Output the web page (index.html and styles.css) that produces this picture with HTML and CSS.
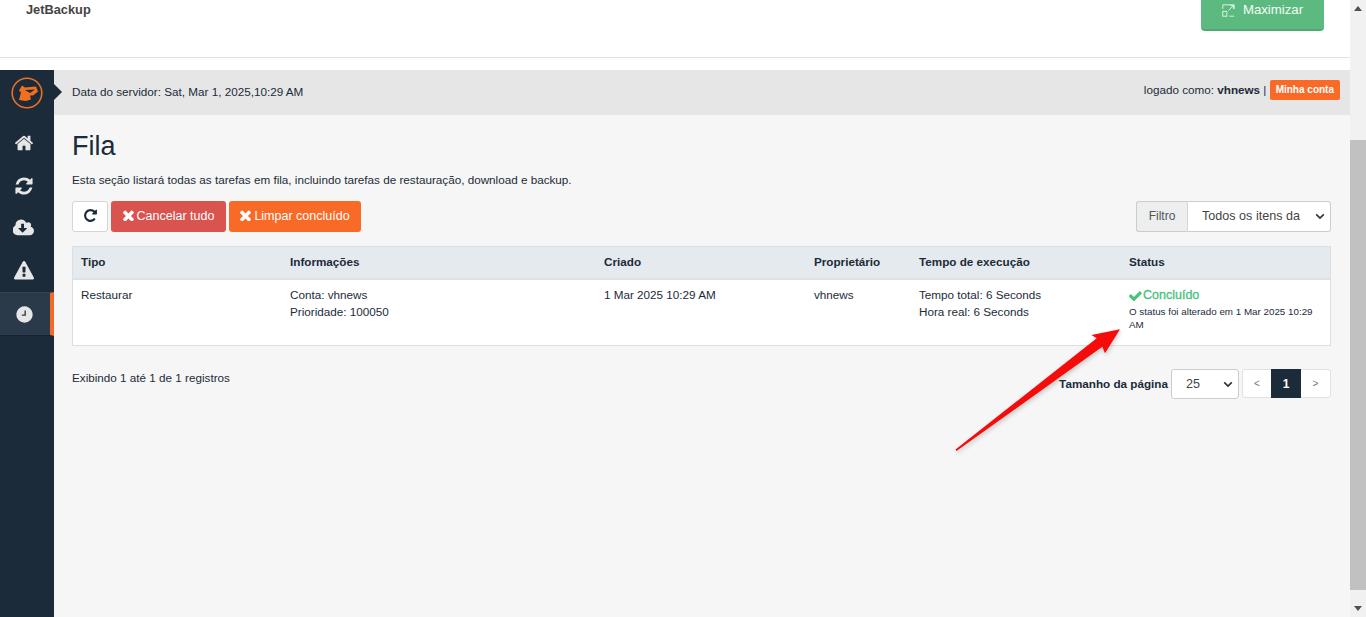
FILE: index.html
```html
<!DOCTYPE html>
<html lang="pt">
<head>
<meta charset="utf-8">
<title>JetBackup - Fila</title>
<link rel="stylesheet" href="styles.css">
</head>
<body>
<div class="window">
  <div class="page">
    <header class="cp-header">
      <div class="cp-title">JetBackup</div>
      <a class="max-btn">
        <svg class="max-icon" viewBox="0 0 16 16" fill="none" stroke="currentColor" stroke-width="1"><rect x="1" y="9" width="5" height="6"/><path d="M1 6V1h14v5M9 15h6M8 8l6-6M10 2h4v4"/></svg>
        Maximizar
      </a>
    </header>
    <div class="app">
      <nav class="sidebar">
        <div class="logo">
          <svg viewBox="0 0 32 32" width="32" height="32"><circle cx="16" cy="16" r="14.8" fill="none" stroke="#e8702a" stroke-width="1.6"/><path d="M8 23l2-7.500-2-2 3-5 3 2 11-1 2 5-5 4h-3l1 4-5 1.500z" fill="#f0701f"/><path d="M14 13l10-.5-5 3.500z" fill="#1c2b39"/></svg>
        </div>
        <a class="nav-item"><svg class="nav-icon" viewBox="0 0 1792 1792"><path d="M1472 992v480q0 26-19 45t-45 19h-384v-384h-256v384h-384q-26 0-45-19t-19-45v-480q0-1 .5-3t.5-3l575-474 575 474q1 2 1 6zm223-69l-62 74q-8 9-21 11h-3q-13 0-21-7l-692-577-692 577q-12 8-24 7-13-2-21-11l-62-74q-8-10-7-23.500t11-21.500l719-599q32-26 76-26t76 26l244 204v-195q0-14 9-23t23-9h192q14 0 23 9t9 23v408l219 182q10 8 11 21.500t-7 23.500z"/></svg></a>
        <a class="nav-item"><svg class="nav-icon" viewBox="0 0 1792 1792"><path d="M1639 1056q0 5-1 7-64 268-268 434.500t-478 166.500q-146 0-282.500-55t-243.500-157l-129 129q-19 19-45 19t-45-19-19-45v-448q0-26 19-45t45-19h448q26 0 45 19t19 45-19 45l-137 137q71 66 161 102t187 36q134 0 250-65t186-179q11-17 53-117 8-23 30-23h192q13 0 22.500 9.500t9.500 22.500zm25-800v448q0 26-19 45t-45 19h-448q-26 0-45-19t-19-45 19-45l138-138q-148-137-349-137-134 0-250 65t-186 179q-11 17-53 117-8 23-30 23h-199q-13 0-22.500-9.500t-9.500-22.500v-7q65-268 270-434.500t480-166.500q146 0 284 55.500t245 156.500l130-129q19-19 45-19t45 19 19 45z"/></svg></a>
        <a class="nav-item"><svg class="nav-icon wide" viewBox="0 0 1920 1792"><path d="M1216 928q0-14-9-23t-23-9h-224v-352q0-13-9.500-22.500t-22.500-9.500h-192q-13 0-22.500 9.500t-9.500 22.500v352h-224q-13 0-22.500 9.500t-9.500 22.500q0 14 9 23l352 352q9 9 23 9t23-9l351-351q10-12 10-24zm640 224q0 159-112.500 271.500t-271.500 112.500h-1088q-185 0-316.500-131.500t-131.500-316.500q0-130 70-240t188-165q-2-30-2-43 0-212 150-362t362-150q156 0 285.500 87t188.500 231q71-62 166-62 106 0 181 75t75 181q0 76-41 138 130 31 213.500 135.500t83.500 238.500z"/></svg></a>
        <a class="nav-item"><svg class="nav-icon" viewBox="0 0 1792 1792"><path d="M1024 1375v-190q0-14-9.500-23.500t-22.500-9.500h-192q-13 0-22.500 9.500t-9.500 23.500v190q0 14 9.500 23.500t22.500 9.500h192q13 0 22.500-9.500t9.500-23.500zm-2-374l18-459q0-12-10-19-13-11-24-11h-220q-11 0-24 11-10 7-10 21l17 457q0 10 10 16.500t24 6.500h185q14 0 23.500-6.500t10.500-16.500zm-14-934l768 1408q35 63-2 126-17 29-46.500 46t-63.500 17h-1536q-34 0-63.500-17t-46.500-46q-37-63-2-126l768-1408q17-31 47-49t65-18 65 18 47 49z"/></svg></a>
        <a class="nav-item active"><svg class="nav-icon clock" viewBox="0 0 1792 1792"><path fill-rule="evenodd" d="M1024 544v448q0 14-9 23t-23 9h-320q-14 0-23-9t-9-23v-64q0-14 9-23t23-9h224v-352q0-14 9-23t23-9h64q14 0 23 9t9 23zm640 352q0 209-103 385.500t-279.500 279.500-385.500 103-385.500-103-279.500-279.500-103-385.500 103-385.500 279.500-279.500 385.500-103 385.500 103 279.500 279.500 103 385.500z"/></svg></a>
      </nav>
      <div class="workspace">
        <div class="topbar">
          <span class="server-date">Data do servidor: Sat, Mar 1, 2025,10:29 AM</span>
          <span class="account">logado como: <b>vhnews</b> | <a class="account-btn">Minha conta</a></span>
        </div>
        <main class="content">
          <h1 class="title">Fila</h1>
          <p class="intro">Esta seção listará todas as tarefas em fila, incluindo tarefas de restauração, download e backup.</p>
          <div class="toolbar">
            <div class="actions">
              <button class="btn btn-default" aria-label="Atualizar"><svg class="refresh-icon" viewBox="0 0 1792 1792"><path d="M1664 256v448q0 26-19 45t-45 19h-448q-42 0-59-40-17-39 14-69l138-138q-148-137-349-137-104 0-198.500 40.500t-163.500 109.500-109.500 163.500-40.500 198.500 40.500 198.500 109.500 163.500 163.500 109.500 198.500 40.500q119 0 225-52t179-147q7-10 23-12 15 0 25 9l137 138q9 8 9.500 20.500t-7.500 22.500q-109 132-264 204.500t-327 72.500q-156 0-298-61t-245-164-164-245-61-298 61-298 164-245 245-164 298-61q147 0 284.500 55.500t244.500 156.500l130-129q29-31 70-14 39 17 39 59z"/></svg></button>
              <button class="btn btn-danger"><svg class="x-icon" viewBox="300 300 1200 1200"><path d="M1490 1322q0 40-28 68l-136 136q-28 28-68 28t-68-28l-294-294-294 294q-28 28-68 28t-68-28l-136-136q-28-28-28-68t28-68l294-294-294-294q-28-28-28-68t28-68l136-136q28-28 68-28t68 28l294 294 294-294q28-28 68-28t68 28l136 136q28 28 28 68t-28 68l-294 294 294 294q28 28 28 68z"/></svg>Cancelar tudo</button>
              <button class="btn btn-orange"><svg class="x-icon" viewBox="300 300 1200 1200"><path d="M1490 1322q0 40-28 68l-136 136q-28 28-68 28t-68-28l-294-294-294 294q-28 28-68 28t-68-28l-136-136q-28-28-28-68t28-68l294-294-294-294q-28-28-28-68t28-68l136-136q28-28 68-28t68 28l294 294 294-294q28-28 68-28t68 28l136 136q28 28 28 68t-28 68l-294 294 294 294q28 28 28 68z"/></svg>Limpar concluído</button>
            </div>
            <div class="filter">
              <span class="filter-label">Filtro</span>
              <select class="select filter-select"><option>Todos os itens da</option></select>
            </div>
          </div>
          <div class="table-box">
            <table class="queue">
              <thead>
                <tr>
                  <th class="c-type">Tipo</th>
                  <th class="c-info">Informações</th>
                  <th class="c-date">Criado</th>
                  <th class="c-owner">Proprietário</th>
                  <th class="c-time">Tempo de execução</th>
                  <th class="c-status">Status</th>
                </tr>
              </thead>
              <tbody>
                <tr>
                  <td>Restaurar</td>
                  <td>Conta: vhnews<br>Prioridade: 100050</td>
                  <td>1 Mar 2025 10:29 AM</td>
                  <td>vhnews</td>
                  <td>Tempo total: 6 Seconds<br>Hora real: 6 Seconds</td>
                  <td>
                    <div class="done"><svg class="check-icon" viewBox="130 350 1560 1100"><path d="M1671 566q0 40-28 68l-724 724-136 136q-28 28-68 28t-68-28l-136-136-362-362q-28-28-28-68t28-68l136-136q28-28 68-28t68 28l294 295 656-657q28-28 68-28t68 28l136 136q28 28 28 68z"/></svg>Concluído</div>
                    <div class="status-note">O status foi alterado em 1 Mar 2025 10:29 AM</div>
                  </td>
                </tr>
              </tbody>
            </table>
          </div>
          <div class="table-foot">
            <span class="records">Exibindo 1 até 1 de 1 registros</span>
            <div class="paging">
              <span class="page-size">Tamanho da página</span>
              <select class="select size-select"><option>25</option></select>
              <div class="pager">
                <a class="pg pg-prev">&lt;</a><a class="pg current">1</a><a class="pg pg-next">&gt;</a>
              </div>
            </div>
          </div>
        </main>
      </div>
    </div>
  </div>
  <div class="scrollbar">
    <svg class="sb-arrow" viewBox="0 0 16 17"><path d="M4 11l4-5 4 5z"/></svg>
    <div class="sb-track"><div class="sb-thumb"></div></div>
    <svg class="sb-arrow" viewBox="0 0 16 17"><path d="M4 6l4 5 4-5z"/></svg>
  </div>
  <svg class="callout" viewBox="0 0 1366 617" width="1366" height="617"><path d="M955.500 449.500L1096.700 338.300 1091.500 335 1120 329.300 1105 353.300 1102.300 346.700 956.500 451z" fill="#f60b0b"/></svg>
</div>
</body>
</html>
```
FILE: styles.css
```css
* { box-sizing: border-box; }
html, body { margin: 0; height: 100%; overflow: hidden; }
body { font-family: "Liberation Sans", Arial, sans-serif; font-size: 11.7px; color: #1c2b39; background: #fff; }
.window { position: relative; display: flex; width: 1366px; height: 617px; overflow: hidden; }
.page { flex: 1; min-width: 0; display: flex; flex-direction: column; }

.cp-header { height: 70px; display: flex; justify-content: space-between; align-items: flex-start; padding: 0 26px; background: #fff; position: relative; }
.cp-header::after { content: ""; position: absolute; left: 0; right: 0; top: 57px; height: 1px; background: #e2e2e2; }
.cp-title { font-size: 12.8px; font-weight: 700; color: #444; line-height: 18px; padding-top: 1px; }
.max-btn { width: 123px; height: 31px; display: flex; align-items: flex-start; justify-content: center; gap: 8px; background: #5cb97f; border-bottom: 2px solid #52a873; border-radius: 0 0 4px 4px; color: #f2fff6; font-size: 13.2px; line-height: 20px; }
.max-icon { width: 13px; height: 13px; margin-top: 4px; }

.app { flex: 1; display: flex; min-height: 0; }
.sidebar { width: 54px; flex: none; background: #1c2b39; display: flex; flex-direction: column; }
.logo { height: 52px; display: flex; justify-content: center; padding-top: 7px; }
.logo svg { display: block; }
.nav-item { height: 42.5px; display: flex; align-items: center; justify-content: center; padding-right: 6px; }
.nav-icon { width: 20px; height: 20px; fill: #e6e6e6; }
.nav-icon.wide { width: 22px; }
.nav-icon.clock { width: 19px; height: 19px; }
.nav-item.active { background: #2a3a4a; border-right: 4px solid #f26a25; padding-right: 2px; border-top: 1px solid #34424f; border-bottom: 1px solid #16222e; height: 44px; }

.workspace { flex: 1; min-width: 0; display: flex; flex-direction: column; background: #f6f6f6; }
.topbar { position: relative; height: 45px; background: #e6e6e6; display: flex; justify-content: space-between; align-items: center; padding: 0 10px 0 18px; }
.topbar::before { content: ""; position: absolute; left: 0; top: 14px; border-left: 8px solid #1c2b39; border-top: 8px solid transparent; border-bottom: 8px solid transparent; }
.server-date { line-height: 16px; margin-top: -2px; }
.account { margin-top: -5px; line-height: 20px; }
.account-btn { display: inline-block; vertical-align: middle; height: 20px; line-height: 20px; padding: 0 6px; background: #f96a27; border-radius: 2px; color: #fff; font-size: 10px; font-weight: 700; }

.content { flex: 1; padding: 0 19px 0 18px; }
.title { margin: 14px 0 0; font-size: 27px; font-weight: 400; line-height: 34px; color: #1c2b39; }
.intro { margin: 10px 0 0; line-height: 14px; color: #1c2b39; }

.toolbar { margin-top: 14px; display: flex; justify-content: space-between; align-items: flex-start; }
.actions { display: flex; gap: 3px; }
.btn { height: 31px; display: flex; align-items: center; justify-content: center; border-radius: 3px; border: 1px solid transparent; font: 12.5px "Liberation Sans", Arial, sans-serif; color: #fff; padding: 0 0 2px; }
.btn-default { width: 36px; background: #fff; border-color: #d6d6d6; color: #1c2b39; }
.btn-danger { width: 115px; background: #d9534f; }
.btn-orange { width: 132px; background: #f96a27; }
.refresh-icon { width: 15px; height: 15px; fill: #1c2b39; }
.x-icon { width: 11px; height: 11px; fill: #fff; margin-right: 3px; }

.filter { display: flex; width: 195px; height: 31px; }
.filter-label { width: 52px; display: flex; align-items: center; justify-content: center; background: #eceeef; border: 1px solid #ccc; border-right: 1px solid #d5d5d5; border-radius: 3px 0 0 3px; color: #555; font-size: 12px; padding-bottom: 2px; }
.select { appearance: none; -webkit-appearance: none; font: 12.6px "Liberation Sans", Arial, sans-serif; color: #444; background-color: #fff; background-image: url("data:image/svg+xml,%3Csvg xmlns='http://www.w3.org/2000/svg' viewBox='0 0 12 8'%3E%3Cpath d='M1.500 1.500L6 6l4.500-4.500' fill='none' stroke='%23333' stroke-width='2'/%3E%3C/svg%3E"); background-repeat: no-repeat; background-size: 10px 7px; background-position: right 5px center; border: 1px solid #ccc; outline: none; }
.filter-select { flex: 1; min-width: 0; border-left: 0; border-radius: 0 3px 3px 0; padding: 0 22px 1px 14px; }

.table-box { margin-top: 14px; background: #fff; border: 1px solid #dcdfe2; height: 100px; }
.queue { width: 100%; border-collapse: collapse; table-layout: fixed; }
.queue th { height: 32px; padding: 0 8px 2px; background: #e5eaef; border-bottom: 2px solid #dde1e5; text-align: left; font-weight: 700; color: #1c2b39; }
.queue td { padding: 6px 8px; vertical-align: top; line-height: 17px; color: #1c2b39; }
.c-type { width: 209px; }
.c-info { width: 314px; }
.c-date { width: 210px; }
.c-owner { width: 105px; }
.c-time { width: 210px; }
.done { color: #46c37b; font-size: 12.5px; line-height: 17px; margin-top: 1px; display: flex; align-items: center; gap: 1px; -webkit-text-stroke: 0.3px #46c37b; }
.check-icon { width: 13px; height: 10px; fill: #46c37b; }
.status-note { font-size: 9.8px; line-height: 13px; margin-top: 1px; color: #1c2b39; }

.table-foot { margin-top: 23px; display: flex; justify-content: space-between; align-items: flex-start; }
.records { margin-top: 2px; line-height: 14px; }
.paging { display: flex; align-items: flex-start; }
.page-size { font-weight: 700; line-height: 30px; margin-right: 3px; }
.size-select { width: 68px; height: 30px; border-radius: 3px; padding: 0 0 1px 14px; margin-right: 3px; }
.pager { display: flex; height: 29px; background: #fff; border: 1px solid #e2e2e2; border-radius: 3px; }
.pg { display: flex; align-items: center; justify-content: center; font-size: 10px; color: #777; }
.pg-prev { width: 28px; }
.pg-next { width: 29px; }
.pg.current { width: 30px; background: #1c2b39; color: #fff; font-size: 12px; font-weight: 700; margin: -1px 0; }

.scrollbar { width: 16px; flex: none; background: #f1f1f1; display: flex; flex-direction: column; }
.sb-arrow { width: 16px; height: 17px; flex: none; fill: #505050; }
.sb-track { flex: 1; padding: 123px 0 10px 0; display: flex; }
.sb-thumb { width: 100%; background: #c1c1c1; }

.callout { position: absolute; left: 0; top: 0; pointer-events: none; filter: drop-shadow(1px 2px 2px rgba(0,0,0,.2)); }
```
